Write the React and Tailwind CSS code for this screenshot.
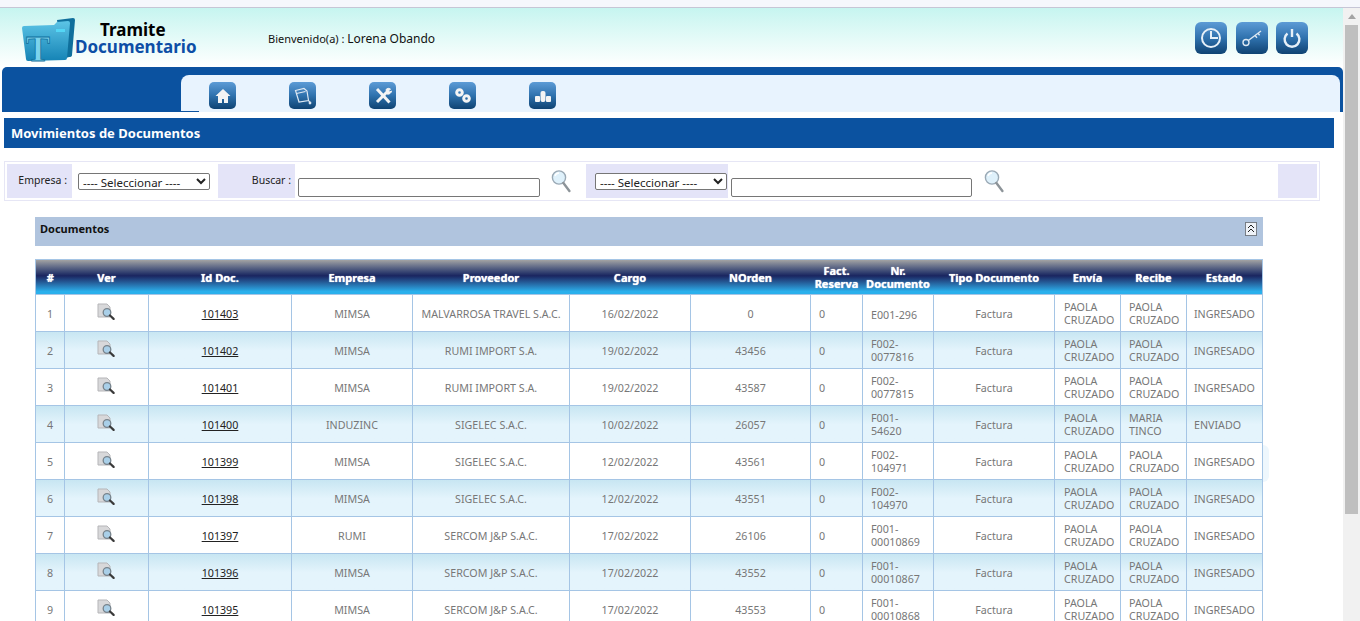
const rows = [
  ["1", "101403", "MIMSA", "MALVARROSA TRAVEL S.A.C.", "16/02/2022", "0", "E001-296", "PAOLA CRUZADO", "PAOLA CRUZADO", "INGRESADO"],
  ["2", "101402", "MIMSA", "RUMI IMPORT S.A.", "19/02/2022", "43456", "F002-0077816", "PAOLA CRUZADO", "PAOLA CRUZADO", "INGRESADO"],
  ["3", "101401", "MIMSA", "RUMI IMPORT S.A.", "19/02/2022", "43587", "F002-0077815", "PAOLA CRUZADO", "PAOLA CRUZADO", "INGRESADO"],
  ["4", "101400", "INDUZINC", "SIGELEC S.A.C.", "10/02/2022", "26057", "F001-54620", "PAOLA CRUZADO", "MARIA TINCO", "ENVIADO"],
  ["5", "101399", "MIMSA", "SIGELEC S.A.C.", "12/02/2022", "43561", "F002-104971", "PAOLA CRUZADO", "PAOLA CRUZADO", "INGRESADO"],
  ["6", "101398", "MIMSA", "SIGELEC S.A.C.", "12/02/2022", "43551", "F002-104970", "PAOLA CRUZADO", "PAOLA CRUZADO", "INGRESADO"],
  ["7", "101397", "RUMI", "SERCOM J&P S.A.C.", "17/02/2022", "26106", "F001-00010869", "PAOLA CRUZADO", "PAOLA CRUZADO", "INGRESADO"],
  ["8", "101396", "MIMSA", "SERCOM J&P S.A.C.", "17/02/2022", "43552", "F001-00010867", "PAOLA CRUZADO", "PAOLA CRUZADO", "INGRESADO"],
  ["9", "101395", "MIMSA", "SERCOM J&P S.A.C.", "17/02/2022", "43553", "F001-00010868", "PAOLA CRUZADO", "PAOLA CRUZADO", "INGRESADO"],
];

const headers = [
  ["#", "w-[29px]"],
  ["Ver", "w-[84px]"],
  ["Id Doc.", "w-[143px]"],
  ["Empresa", "w-[121px]"],
  ["Proveedor", "w-[157px]"],
  ["Cargo", "w-[121px]"],
  ["NOrden", "w-[120px]"],
  ["Fact. Reserva", "w-[52px]"],
  ["Nr. Documento", "w-[71px]"],
  ["Tipo Documento", "w-[121px]"],
  ["Envía", "w-[66px]"],
  ["Recibe", "w-[66px]"],
  ["Estado", "w-[76px]"],
];

function IconButton({ size, children }) {
  const box = size === "lg" ? "w-8 h-8 rounded-[6px]" : "w-[27px] h-[27px] rounded-[5px]";
  return (
    <div className={`${box} flex items-center justify-center bg-gradient-to-b from-[#5c9bd6] via-[#2f72ae] to-[#0f4373]`}>
      {children}
    </div>
  );
}

function Lens() {
  return (
    <svg width="20" height="24" viewBox="0 0 20 24" fill="none">
      <circle cx="8" cy="8.5" r="6.6" fill="#dff1fb" stroke="#9aa9b5" strokeWidth="1.4" />
      <path d="M4 7c.6-2 2-3 4-3" stroke="#fff" strokeWidth="1.4" />
      <path d="M12.4 14l6 8" stroke="#8d9499" strokeWidth="2.4" strokeLinecap="round" />
    </svg>
  );
}

function ViewIcon() {
  return (
    <svg width="18" height="17" viewBox="0 0 18 17" className="inline-block">
      <path d="M1 1h9l3 3v10H1z" fill="#d8d8da" stroke="#b5b5b8" />
      <circle cx="10" cy="9.5" r="3.8" fill="#a9cfe8" stroke="#77838c" strokeWidth="1.3" />
      <path d="M13 12.5l3.6 3.4" stroke="#3a3a3a" strokeWidth="2.2" strokeLinecap="round" />
    </svg>
  );
}

export default function App() {
  return (
    <div className="relative h-[621px] w-[1360px] overflow-hidden bg-white font-['Noto_Sans',sans-serif]">
      {/* scrollbar */}
      <div className="absolute right-0 top-[8px] bottom-0 w-[17px] bg-[#f1f1f1]">
        <div className="mx-auto mt-[6px] h-0 w-0 border-x-[4px] border-b-[5px] border-x-transparent border-b-[#a3a3a3]" />
        <div className="absolute left-[2px] top-[17px] h-[489px] w-[13px] bg-[#bfbfbf]" />
      </div>

      <div className="absolute left-[1263px] top-[445px] h-[37px] w-[6px] rounded-r-full bg-[#eef7fd]" />

      <div className="h-[8px] border-b border-[#c6c6d6] bg-[#f5f7fc]" />

      <div className="w-[1343px]">
        {/* cabecera */}
        <div className="relative h-[59px] bg-gradient-to-b from-[#c6f5f0] to-[#ffffff]">
          <svg width="56" height="56" viewBox="0 0 56 56" className="absolute left-[21px] top-[9px]">
            <defs>
              <linearGradient id="fold" x1="0" y1="0" x2="0" y2="1">
                <stop offset="0" stopColor="#5cc4e6" />
                <stop offset="1" stopColor="#1583b5" />
              </linearGradient>
            </defs>
            <path d="M36 3l16-2q2 0 2 2l-3 35q0 2-3 2l-6 2z" fill="#0f6f9c" />
            <path d="M3 9q-2 0-2 2l4 31q0 2 2 2l37-1q2 0 2-2l3-35q0-2-2-2l-11 1-3 3z" fill="url(#fold)" />
            <rect x="35" y="12" width="9" height="3" fill="#54d6f5" />
            <text x="5" y="44" fontFamily="Liberation Serif" fontWeight="700" fontSize="36" fill="#7bd3ec" stroke="#0f6f9c" strokeWidth="0.8">T</text>
          </svg>
          <div className="absolute left-[100px] top-[13px] text-[17px] font-bold leading-[17px] text-black">Tramite</div>
          <div className="absolute left-[75px] top-[30px] text-[17px] font-bold leading-[17px] text-[#0d4ea6]">Documentario</div>
          <div className="absolute left-[268px] top-[22px] flex items-baseline font-['Liberation_Sans',sans-serif] text-[#111]">
            <span className="text-[11px]">Bienvenido(a) :&nbsp;</span>
            <span className="text-[12px]">Lorena Obando</span>
          </div>
          <div className="absolute left-[1195px] top-[14px]">
            <IconButton size="lg">
              <svg width="24" height="24" viewBox="0 0 24 24" fill="none" stroke="#e6f0f8" strokeWidth="2">
                <circle cx="12" cy="12" r="9" />
                <path d="M12 5v7h7" />
              </svg>
            </IconButton>
          </div>
          <div className="absolute left-[1236px] top-[14px]">
            <IconButton size="lg">
              <svg width="24" height="24" viewBox="0 0 24 24" fill="none" stroke="#dce8f2" strokeWidth="1.4">
                <circle cx="6" cy="16.5" r="3" />
                <path d="M8.3 14.5L21 5M15 9.5l2 2.2M18 7.2l1.6 2" />
              </svg>
            </IconButton>
          </div>
          <div className="absolute left-[1276px] top-[14px]">
            <IconButton size="lg">
              <svg width="24" height="24" viewBox="0 0 24 24" fill="none" stroke="#e6f0f8" strokeWidth="2.4">
                <path d="M7.5 7.5a7.4 7.4 0 1 0 9 0" />
                <path d="M12 3v8" />
              </svg>
            </IconButton>
          </div>
        </div>

        {/* menu */}
        <div className="ml-[2px] flex h-[45px] rounded-t-[5px] bg-[#0b52a0] pt-[8px] pr-[3px]">
          <div className="w-[179px]" />
          <div className="relative flex h-[37px] flex-1 items-start gap-[53px] rounded-t-[8px] bg-[#e8f3fe] pl-[28px] pt-[7px]">
            <div className="absolute bottom-0 left-0 h-px w-[18px] bg-[#0b52a0]" />
            <IconButton>
              <svg width="18" height="18" viewBox="0 0 18 18" fill="#f4f4f4">
                <path d="M9 2L1.5 9H4v7h4v-4h2v4h4V9h2.5z" />
              </svg>
            </IconButton>
            <IconButton>
              <svg width="20" height="20" viewBox="0 0 20 20" fill="none" stroke="#dfe9f3" strokeWidth="1.2">
                <path d="M2.5 4.5L11 2.5l3 2.5 1.5 9.5-9.5 1.5z" />
                <path d="M3.5 7.5l9-2M15.5 14.5l1.5 2" />
                <circle cx="17" cy="17" r="0.8" fill="#dfe9f3" />
              </svg>
            </IconButton>
            <IconButton>
              <svg width="20" height="20" viewBox="0 0 20 20" fill="none" stroke="#f4f4f4">
                <path d="M4 3l12.5 13.5" strokeWidth="3" />
                <path d="M15.5 4.5L4 16" strokeWidth="3" />
                <path d="M13 3.5a3.5 3.500 0 0 1 4.500-.5l-2 2 1 1 2-1a3.500 3.500 0 0 1-4.500 3z" fill="#f4f4f4" strokeWidth="1" />
              </svg>
            </IconButton>
            <IconButton>
              <svg width="20" height="20" viewBox="0 0 20 20" fill="none" stroke="#f4f4f4" strokeWidth="3">
                <circle cx="6.5" cy="6.5" r="2.8" />
                <circle cx="13.5" cy="12.5" r="2.8" />
              </svg>
            </IconButton>
            <IconButton>
              <svg width="20" height="20" viewBox="0 0 20 20" fill="#f4f4f4">
                <rect x="2" y="10" width="5" height="6" rx="1" />
                <rect x="7.5" y="5" width="5" height="11" rx="2" />
                <rect x="13" y="10" width="5" height="6" rx="1" />
              </svg>
            </IconButton>
          </div>
        </div>

        {/* titulo */}
        <div className="ml-[4px] mt-[6px] flex h-[30px] w-[1330px] items-center bg-[#0b52a0] pl-[7px] pt-[1px] text-[13px] font-bold text-white">
          Movimientos de Documentos
        </div>

        {/* filtros */}
        <div className="ml-[4px] mt-[13px] flex h-[40px] w-[1316px] items-stretch border border-[#e6e6f5] p-[2px] text-[10.5px] text-[#222]">
          <div className="flex w-[65px] items-center justify-end bg-[#e4e4f8] pr-[5px]">Empresa :</div>
          <select className="ml-[6px] mt-[9px] h-[17px] w-[132px] rounded-[2px] border border-[#767676] bg-white pb-[2px] text-[11.5px] leading-[13px]">
            <option>---- Seleccionar ----</option>
          </select>
          <div className="ml-[8px] flex w-[77px] items-center justify-end bg-[#e4e4f8] pr-[4px]">Buscar :</div>
          <input className="ml-[3px] mt-[14px] h-[19px] w-[242px] rounded-[2px] border border-[#767676]" />
          <div className="ml-[11px] mt-[5px]"><Lens /></div>
          <div className="ml-[15px] w-[142px] bg-[#e4e4f8] pl-[9px] pt-[9px]">
            <select className="h-[17px] w-[132px] rounded-[2px] border border-[#767676] bg-white pb-[2px] text-[11.5px] leading-[13px]">
              <option>---- Seleccionar ----</option>
            </select>
          </div>
          <input className="ml-[3px] mt-[14px] h-[19px] w-[241px] rounded-[2px] border border-[#767676]" />
          <div className="ml-[12px] mt-[5px]"><Lens /></div>
          <div className="ml-[274px] w-[39px] bg-[#e4e4f8]" />
        </div>

        {/* documentos */}
        <div className="ml-[35px] mt-[16px] flex h-[29px] w-[1228px] items-center justify-between bg-[#b0c4de] pl-[5px] pr-[6px] text-[11px] font-bold text-[#111]">
          <span className="mb-[5px]">Documentos</span>
          <svg width="12" height="14" viewBox="0 0 12 14" fill="none" stroke="#222" className="mb-[5px]">
            <rect x="0.5" y="0.5" width="11" height="13" strokeDasharray="1 1" fill="#eef2f8" />
            <path d="M3 6l3-3 3 3M3 10l3-3 3 3" />
          </svg>
        </div>

        <table className="ml-[35px] mt-[13px] w-[1228px] table-fixed border-collapse border border-[#a5c5e5] text-[10.7px] text-[#777]">
          <thead>
            <tr className="h-[35px] bg-gradient-to-b from-[#a3a3a3] via-[#1a2560] via-45% to-[#2ab0ec] to-90%">
              {headers.map(([label, width]) => (
                <th key={label} className={`${width} p-0 text-center text-[11px] font-bold leading-[13px] text-white [text-shadow:0_0_1px_#ffffff]`}>
                  {label}
                </th>
              ))}
            </tr>
          </thead>
          <tbody>
            {rows.map((row, i) => (
              <tr key={row[0]} className={`h-[37px] ${i % 2 === 1 ? "bg-gradient-to-b from-[#c8e6f2] to-[#e4f4fc] to-50%" : "bg-white"}`}>
                <td className="border border-[#a5c5e5] pt-[3px] text-center">{row[0]}</td>
                <td className="border border-[#a5c5e5] pb-[3px] pr-[2px] text-center"><ViewIcon /></td>
                <td className="border border-[#a5c5e5] pt-[3px] text-center text-[#222] underline">{row[1]}</td>
                <td className="border border-[#a5c5e5] pt-[3px] text-center">{row[2]}</td>
                <td className="border border-[#a5c5e5] pt-[3px] text-center">{row[3]}</td>
                <td className="border border-[#a5c5e5] pt-[3px] text-center">{row[4]}</td>
                <td className="border border-[#a5c5e5] pt-[3px] text-center">{row[5]}</td>
                <td className="border border-[#a5c5e5] pl-[8px] pt-[3px]">0</td>
                <td className={`border border-[#a5c5e5] pl-[8px] pr-[8px] leading-[13px] ${row[6].length < 9 ? "pt-[4px]" : "pt-[2px]"}`}>{row[6]}</td>
                <td className="border border-[#a5c5e5] pt-[3px] text-center">Factura</td>
                <td className="border border-[#a5c5e5] pl-[9px] pt-[2px] leading-[13px]">{row[7]}</td>
                <td className="border border-[#a5c5e5] pl-[8px] pt-[2px] leading-[13px]">{row[8]}</td>
                <td className="border border-[#a5c5e5] pl-[7px] pt-[3px]">{row[9]}</td>
              </tr>
            ))}
          </tbody>
        </table>
      </div>
    </div>
  );
}
